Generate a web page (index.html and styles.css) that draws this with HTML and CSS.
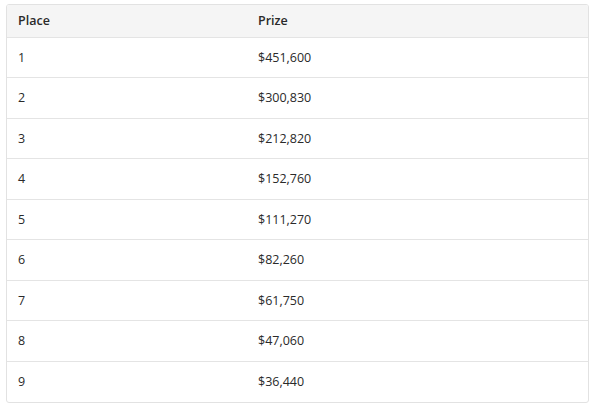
FILE: index.html
```html
<!DOCTYPE html>
<html>
<head>
<meta charset="utf-8">
<link rel="stylesheet" href="styles.css">
</head>
<body>
<div class="wrap">
<table class="prizes">
<thead>
<tr><th class="c1">Place</th><th>Prize</th></tr>
</thead>
<tbody>
<tr><td class="c1">1</td><td>$451,600</td></tr>
<tr><td class="c1">2</td><td>$300,830</td></tr>
<tr><td class="c1">3</td><td>$212,820</td></tr>
<tr><td class="c1">4</td><td>$152,760</td></tr>
<tr><td class="c1">5</td><td>$111,270</td></tr>
<tr><td class="c1">6</td><td>$82,260</td></tr>
<tr><td class="c1">7</td><td>$61,750</td></tr>
<tr><td class="c1">8</td><td>$47,060</td></tr>
<tr><td class="c1">9</td><td>$36,440</td></tr>
</tbody>
</table>
</div>
</body>
</html>
```
FILE: styles.css
```css
html, body {
  margin: 0;
  padding: 0;
  background: #ffffff;
}
body {
  padding: 4px 5px 0 6px;
  font-family: "Open Sans", "Noto Sans", sans-serif;
  font-size: 12.5px;
  color: #2a2a2a;
}
.wrap {
  border: 1px solid #e2e2e2;
  border-radius: 3px;
  overflow: hidden;
  width: 583px;
  box-sizing: border-box;
}
.prizes {
  width: 100%;
  border-collapse: collapse;
}
.prizes th {
  background: #f5f5f5;
  font-weight: 600;
  font-size: 12.5px;
  text-align: left;
  height: 32px;
  padding: 0 11px;
  box-sizing: border-box;
}
.prizes td {
  height: 40.5px;
  padding: 0 11px;
  border-top: 1px solid #e4e4e4;
  box-sizing: border-box;
}
.prizes .c1 {
  width: 240px;
  box-sizing: border-box;
}
```
